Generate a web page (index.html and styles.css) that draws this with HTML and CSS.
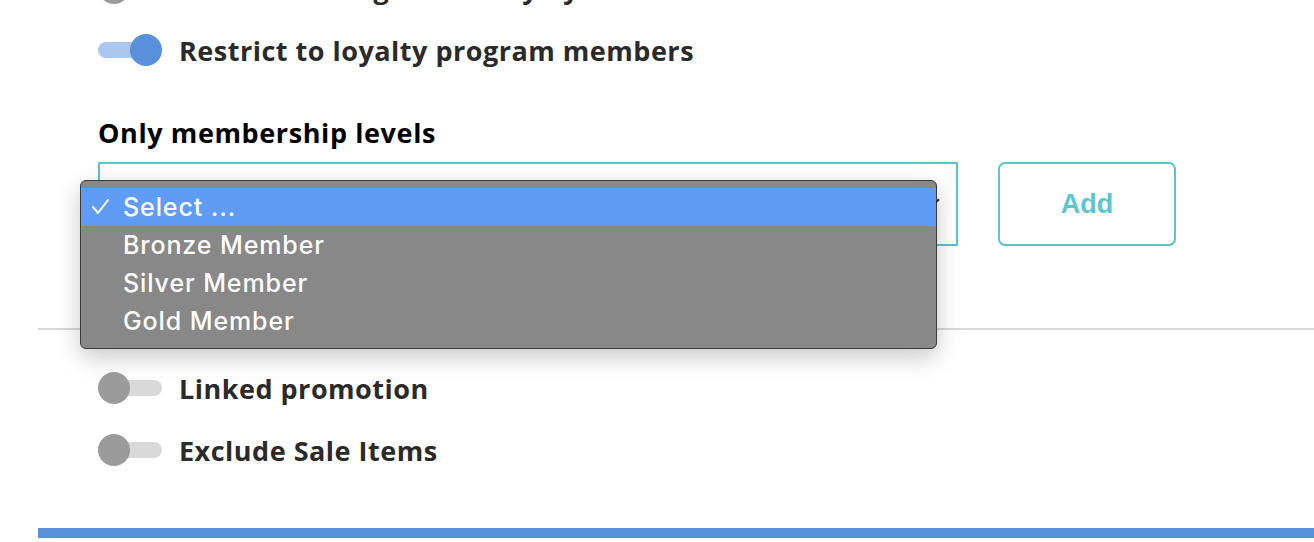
FILE: index.html
```html
<!DOCTYPE html>
<html>
<head>
    <title>Promotion Settings</title>
    <meta name="viewport" content="width=device-width, initial-scale=1">
    <link rel="stylesheet" href="styles.css">
</head>
<body>
    <div class="page">
        <div class="section section-top">
            <div class="toggle-list">
                <div class="toggle-row">
                    <span class="toggle"><span class="knob"></span></span>
                    <span class="toggle-label">Restrict to single use only by customer</span>
                </div>
                <div class="toggle-row">
                    <span class="toggle on"><span class="knob"></span></span>
                    <span class="toggle-label">Restrict to loyalty program members</span>
                </div>
            </div>

            <div class="form-group">
                <label>Only membership levels</label>
                <div class="select-row">
                    <div class="select-box">
                        <span class="select-arrow"></span>
                        <div class="select-menu">
                            <div class="option selected">
                                <svg class="check" width="20" height="20" viewBox="0 0 20 20">
                                    <polyline points="2,10 7,16 17,3" fill="none" stroke="white" stroke-width="2" stroke-linecap="round" stroke-linejoin="round"/>
                                </svg>
                                Select ...
                            </div>
                            <div class="option">Bronze Member</div>
                            <div class="option">Silver Member</div>
                            <div class="option">Gold Member</div>
                        </div>
                    </div>
                    <button class="btn-add">Add</button>
                </div>
            </div>
        </div>

        <div class="divider"></div>

        <div class="section">
            <div class="toggle-list">
                <div class="toggle-row">
                    <span class="toggle"><span class="knob"></span></span>
                    <span class="toggle-label">Linked promotion</span>
                </div>
                <div class="toggle-row">
                    <span class="toggle"><span class="knob"></span></span>
                    <span class="toggle-label">Exclude Sale Items</span>
                </div>
            </div>
        </div>

        <div class="footer-bar"></div>
    </div>
</body>
</html>
```

FILE: styles.css
```css
* {
    margin: 0;
    padding: 0;
    box-sizing: border-box;
}

body {
    font-family: 'Open Sans', Arial, sans-serif;
    background: white;
    overflow: hidden;
}

.page {
    padding-left: 38px;
}

.section {
    padding-left: 60px;
}

.section-top {
    margin-top: -28px;
}

.toggle-list {
    display: flex;
    flex-direction: column;
    gap: 30px;
}

.toggle-row {
    display: flex;
    align-items: center;
    height: 32px;
}

.toggle {
    position: relative;
    width: 64px;
    height: 16px;
    border-radius: 8px;
    background: #d9d9d9;
    margin-right: 17px;
    flex-shrink: 0;
}

.toggle .knob {
    position: absolute;
    left: 0;
    top: -8px;
    width: 32px;
    height: 32px;
    border-radius: 50%;
    background: #9b9b9b;
}

.toggle.on {
    width: 52px;
    background: #abc6ef;
    margin-right: 29px;
}

.toggle.on .knob {
    left: 32px;
    background: #5a8fdb;
}

.toggle-label {
    font-size: 27px;
    font-weight: 700;
    color: #2a2a2a;
    letter-spacing: 0.5px;
    white-space: nowrap;
}

.form-group {
    margin-top: 50px;
}

label {
    display: block;
    font-size: 27px;
    font-weight: 700;
    color: #000;
    letter-spacing: 0.6px;
    line-height: 34px;
    margin-bottom: 12px;
}

.select-row {
    display: flex;
    align-items: stretch;
}

.select-box {
    position: relative;
    width: 860px;
    height: 84px;
    border: 2px solid #5bc4cc;
    background: white;
}

.select-arrow {
    position: absolute;
    right: 18px;
    top: 32px;
    width: 8px;
    height: 8px;
    border-right: 2px solid #333;
    border-bottom: 2px solid #333;
    transform: rotate(45deg);
}

.select-menu {
    position: absolute;
    left: -20px;
    top: 16px;
    width: 857px;
    height: 169px;
    padding-top: 7px;
    background: #888888;
    border: 1px solid #3a3a3a;
    border-radius: 6px;
    box-shadow: 0 8px 24px rgba(0,0,0,0.22);
    font-family: Inter, 'Liberation Sans', Arial, sans-serif;
    overflow: hidden;
}

.option {
    position: relative;
    height: 38px;
    line-height: 38px;
    padding-left: 42px;
    font-size: 25px;
    font-weight: 500;
    letter-spacing: 0.9px;
    color: white;
}

.option.selected {
    background: #5f9cf6;
}

.check {
    position: absolute;
    left: 10px;
    top: 9px;
}

.btn-add {
    width: 178px;
    margin-left: 40px;
    background: white;
    border: 2px solid #5bc4cc;
    border-radius: 7px;
    color: #5bc6cd;
    font-family: 'Liberation Sans', Arial, sans-serif;
    font-size: 27px;
    font-weight: 700;
    cursor: pointer;
}

.divider {
    height: 2px;
    background: #d8d8d8;
    margin-top: 82px;
    margin-bottom: 42px;
}

.footer-bar {
    height: 10px;
    background: #5a8fdb;
    margin-top: 62px;
}
```
